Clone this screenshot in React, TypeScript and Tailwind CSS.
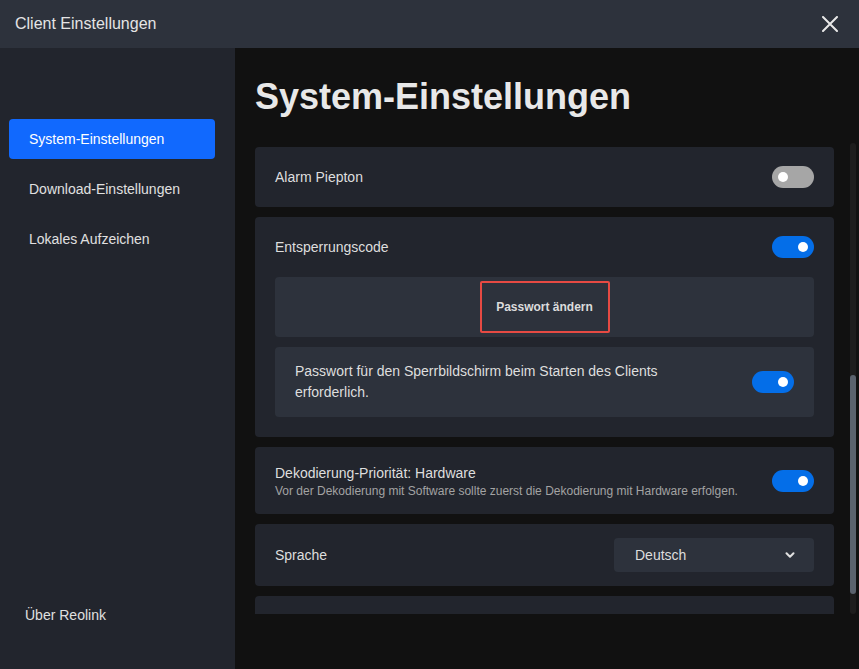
import { ChevronDown } from 'lucide-react';

const font = { fontFamily: '"Liberation Sans", Arial, sans-serif' };

function Toggle({ on }: { on: boolean }) {
  return (
    <div
      className={`flex h-[22px] w-[42px] shrink-0 items-center rounded-full px-[6px] ${
        on ? 'justify-end bg-[#046ee8]' : 'justify-start bg-[#a6a6a6]'
      }`}
    >
      <div className="h-[10px] w-[10px] rounded-full bg-white" />
    </div>
  );
}

const navItems = ['System-Einstellungen', 'Download-Einstellungen', 'Lokales Aufzeichen'];

export default function App() {
  return (
    <div className="flex h-[669px] w-[859px] flex-col overflow-hidden bg-[#111111] text-[#dedede]" style={font}>
      {/* Titelleiste */}
      <div className="flex h-[48px] shrink-0 items-center justify-between bg-[#2d323c] pl-[15px] pr-[21px]">
        <span className="text-[16px] text-[#e4e4e4]">Client Einstellungen</span>
        <svg width="16" height="16" viewBox="0 0 16 16" className="text-[#e8e8e8]">
          <path d="M1 1L15 15M15 1L1 15" stroke="currentColor" strokeWidth="2" strokeLinecap="round" />
        </svg>
      </div>

      <div className="flex min-h-0 flex-1">
        {/* Sidebar */}
        <div className="flex w-[235px] shrink-0 flex-col bg-[#22252d] pl-[9px] pr-[20px] pt-[71px] pb-[43px]">
          {navItems.map((item, i) => (
            <div
              key={item}
              className={`mb-[10px] flex h-[40px] items-center rounded-[4px] pl-[20px] text-[14px] ${
                i === 0 ? 'bg-[#1169fe] text-white' : 'text-[#e0e0e0]'
              }`}
            >
              {item}
            </div>
          ))}
          <div className="mt-auto pl-[16px] text-[14px] text-[#e0e0e0]">Über Reolink</div>
        </div>

        {/* Inhalt */}
        <div className="flex min-w-0 flex-1 flex-col pl-[20px] pr-[2px]">
          <h1 className="flex h-[95px] shrink-0 items-center pt-[2px] text-[36px] font-bold text-[#e8e8e8]">
            System-Einstellungen
          </h1>

          <div className="flex h-[471px] shrink-0 items-stretch">
            <div className="flex w-[579px] shrink-0 flex-col gap-[10px] overflow-hidden pt-[4px]">
              {/* Alarm Piepton */}
              <div className="flex h-[60px] shrink-0 items-center justify-between rounded-[4px] bg-[#22252d] px-[20px]">
                <span className="text-[14px]">Alarm Piepton</span>
                <Toggle on={false} />
              </div>

              {/* Entsperrungscode */}
              <div className="flex shrink-0 flex-col rounded-[4px] bg-[#22252d] px-[20px] pb-[20px]">
                <div className="flex h-[60px] items-center justify-between">
                  <span className="text-[14px]">Entsperrungscode</span>
                  <Toggle on />
                </div>
                <div className="flex h-[60px] items-center justify-center rounded-[4px] bg-[#2d323c]">
                  <div className="flex h-[52px] w-[130px] items-center justify-center rounded-[2px] border-2 border-[#e64a43] text-[12px] font-bold text-[#dcdcdc]">
                    Passwort ändern
                  </div>
                </div>
                <div className="mt-[10px] flex h-[70px] items-center justify-between rounded-[4px] bg-[#2d323c] px-[20px]">
                  <span className="max-w-[380px] text-[14px] leading-[21px]">
                    Passwort für den Sperrbildschirm beim Starten des Clients erforderlich.
                  </span>
                  <Toggle on />
                </div>
              </div>

              {/* Dekodierung */}
              <div className="flex h-[67px] shrink-0 items-center justify-between rounded-[4px] bg-[#22252d] px-[20px]">
                <div className="flex flex-col pt-[1px]">
                  <span className="text-[14px] leading-[20px]">Dekodierung-Priorität: Hardware</span>
                  <span className="text-[12px] leading-[16px] text-[#a3a3a3]">
                    Vor der Dekodierung mit Software sollte zuerst die Dekodierung mit Hardware erfolgen.
                  </span>
                </div>
                <Toggle on />
              </div>

              {/* Sprache */}
              <div className="flex h-[62px] shrink-0 items-center justify-between rounded-[4px] bg-[#22252d] px-[20px]">
                <span className="text-[14px]">Sprache</span>
                <div className="flex h-[34px] w-[200px] items-center justify-between rounded-[4px] bg-[#2d323c] pl-[21px] pr-[17px]">
                  <span className="text-[14px]">Deutsch</span>
                  <ChevronDown size={14} strokeWidth={3.5} className="text-[#e0e0e0]" />
                </div>
              </div>

              <div className="h-[60px] shrink-0 rounded-[4px] bg-[#22252d]" />
            </div>

            {/* Scrollbar */}
            <div className="ml-[16px] flex w-[6px] shrink-0 flex-col rounded-full bg-[#1d1d1d] pt-[232px] pb-[20px]">
              <div className="flex-1 rounded-full bg-[#5b636e]" />
            </div>
          </div>
        </div>
      </div>
    </div>
  );
}
